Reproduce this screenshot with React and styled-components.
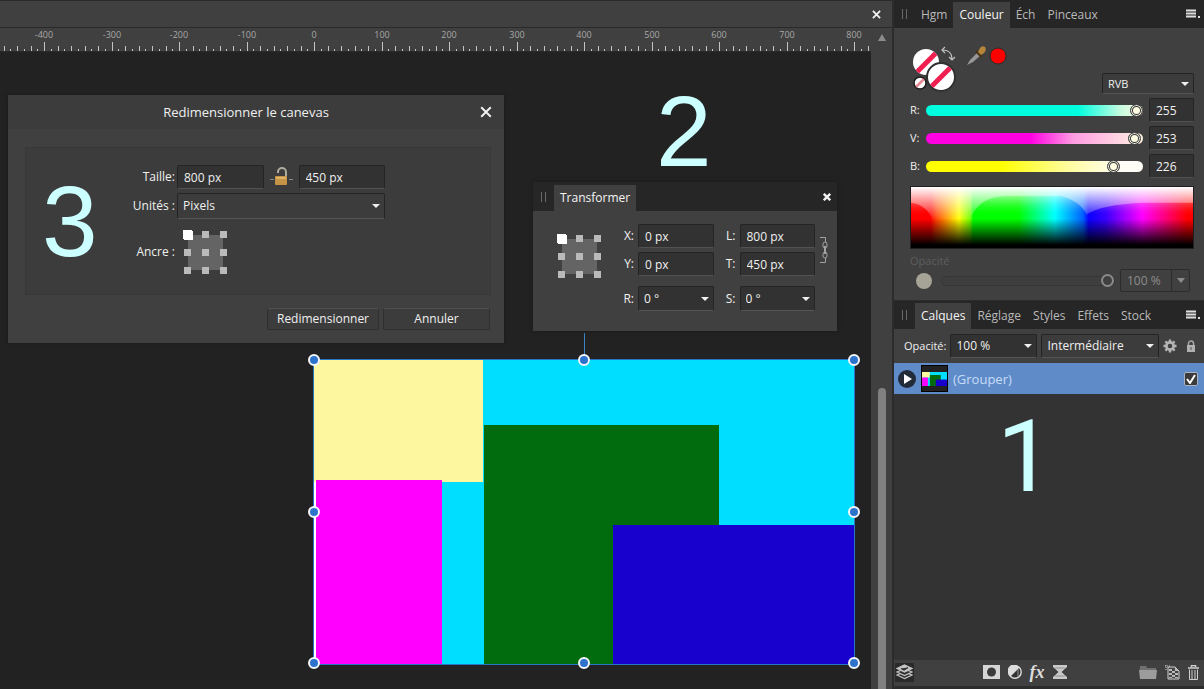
import { useState } from "react";
import styled, { createGlobalStyle } from "styled-components";

const RULER_ORIGIN = 314;
const RULER_STEP = 67.5;

export default function App() {
  return (
    <>
      <GlobalStyle />
      <StyledWorkspace>
        <StyledDocument>
          <StyledTitleBar>
            <CloseButton label="Fermer le document" size={9} />
          </StyledTitleBar>
          <StyledDocumentBody>
            <StyledView>
              <Ruler />
              <StyledCanvas>
                <Selection />
                <ResizeDialog />
                <TransformPanel />
                <StyledNumber $x={656} $y={29}>2</StyledNumber>
                <StyledNumber $x={42} $y={119}>3</StyledNumber>
              </StyledCanvas>
            </StyledView>
            <StyledScrollbar>
              <svg width="8" height="7"><path d="M4 0L8 7H0z" fill="#8c8c8c" /></svg>
              <StyledScrollThumb />
            </StyledScrollbar>
          </StyledDocumentBody>
        </StyledDocument>
        <StyledSidebar>
          <ColorPanel />
          <LayersPanel />
        </StyledSidebar>
      </StyledWorkspace>
    </>
  );
}

const Ruler = () => {
  const ticks = [];
  for (let i = -46; i <= 82; i++) {
    const height = i % 10 === 0 ? 10 : i % 2 === 0 ? 6 : 3;
    ticks.push({ i, x: Math.round(RULER_ORIGIN + (i * RULER_STEP) / 10), height });
  }
  return (
    <StyledRuler>
      {ticks.map(({ i, x, height }) => (
        <rect key={i} x={x} y={24 - height} width="1" height={height} fill="#c4c4c4" />
      ))}
      {ticks.filter(({ i }) => i % 10 === 0).map(({ i, x }) => (
        <text key={i} x={x} y="10" textAnchor="middle">{i * 10}</text>
      ))}
    </StyledRuler>
  );
};

const Artwork = ({ width, height }) => (
  <svg width={width} height={height} viewBox="0 0 540 304" preserveAspectRatio="none" aria-hidden="true">
    <rect width="540" height="304" fill="#00deff" />
    <rect width="169" height="122" fill="#fdf8a0" />
    <rect y="122" width="2" height="182" fill="#fff" />
    <rect x="2" y="120" width="126" height="184" fill="#ff00ff" />
    <rect x="170" y="65" width="235" height="239" fill="#006c0d" />
    <rect x="299" y="165" width="241" height="139" fill="#1800cd" />
  </svg>
);

const Selection = () => (
  <StyledSelection>
    <Artwork width="540" height="304" />
    <StyledRotateLine />
    {[0, 152, 303].map((y) =>
      [0, 270, 540].map((x) => (x === 270 && y === 152 ? null : <StyledHandle key={`${x}-${y}`} $x={x} $y={y} />))
    )}
  </StyledSelection>
);

const CloseButton = ({ label, size, weight = 2 }) => (
  <StyledIconButton type="button" aria-label={label}>
    <svg width={size} height={size} viewBox="0 0 10 10">
      <path d="M1 1L9 9M9 1L1 9" stroke="#f2f2f2" strokeWidth={weight} fill="none" />
    </svg>
  </StyledIconButton>
);

const MenuButton = () => (
  <StyledIconButton type="button" aria-label="Menu du panneau">
    <svg width="15" height="10">
      <path d="M0 1.5H10M0 4.5H10M0 7.5H10" stroke="#dedede" strokeWidth="2" />
      <path d="M12 7h2v2h-2z" fill="#dedede" />
    </svg>
  </StyledIconButton>
);

const Select = ({ id, label, value, options = [], ...rest }) => (
  <StyledSelectBox {...rest}>
    <StyledSelect id={id} aria-label={label} defaultValue={value}>
      {[value, ...options].map((option) => (
        <option key={option}>{option}</option>
      ))}
    </StyledSelect>
    <StyledCaret width="8" height="4"><path d="M0 0H8L4 4z" fill="#f0f0f0" /></StyledCaret>
  </StyledSelectBox>
);

const Anchor = ({ name }) => {
  const [anchor, setAnchor] = useState(0);
  return (
    <StyledAnchor role="radiogroup" aria-label="Ancre">
      {[0, 1, 2, 3, 4, 5, 6, 7, 8].map((i) => (
        <StyledAnchorPoint
          key={i}
          type="radio"
          name={name}
          aria-label={`Point ${i + 1}`}
          checked={anchor === i}
          onChange={() => setAnchor(i)}
        />
      ))}
    </StyledAnchor>
  );
};

const ResizeDialog = () => (
  <StyledDialog role="dialog" aria-labelledby="resize-title">
    <StyledDialogHeader>
      <StyledDialogTitle id="resize-title">Redimensionner le canevas</StyledDialogTitle>
      <CloseButton label="Fermer" size={12} weight={1.6} />
    </StyledDialogHeader>
    <StyledDialogForm>
      <StyledLabel htmlFor="width">Taille:</StyledLabel>
      <StyledSizeRow>
        <StyledInput id="width" defaultValue="800 px" />
        <StyledIconButton type="button" aria-label="Verrouiller les proportions">
          <svg width="23" height="20">
            <path d="M0 12.5H4M19 12.5H23" stroke="#888" />
            <path d="M8 6V5a4 4 0 0 1 8 0v5" fill="none" stroke="#b1aca0" strokeWidth="2" />
            <rect x="5" y="9" width="12" height="9" rx="1" fill="#c49345" />
            <path d="M6 10H16V12H6z" fill="#ddb367" />
          </svg>
        </StyledIconButton>
        <StyledInput aria-label="Hauteur" defaultValue="450 px" />
      </StyledSizeRow>
      <StyledLabel htmlFor="units">Unités :</StyledLabel>
      <Select id="units" value="Pixels" options={["Millimètres", "Pouces"]} $width={208} $height={26} $flat />
      <StyledAnchorLabel>Ancre :</StyledAnchorLabel>
      <Anchor name="dialog-anchor" />
    </StyledDialogForm>
    <StyledDialogFooter>
      <StyledButton type="button" $width={112}>Redimensionner</StyledButton>
      <StyledButton type="button" $width={107}>Annuler</StyledButton>
    </StyledDialogFooter>
  </StyledDialog>
);

const TransformPanel = () => (
  <StyledTransform>
    <StyledTransformHeader>
      <StyledGrip />
      <StyledTab type="button" $active>Transformer</StyledTab>
      <StyledSpacer />
      <CloseButton label="Fermer" size={8} weight={3} />
    </StyledTransformHeader>
    <StyledTransformBody>
      <Anchor name="transform-anchor" />
      <StyledTransformGrid>
        <StyledLabel htmlFor="x">X:</StyledLabel>
        <StyledInput id="x" defaultValue="0 px" />
        <StyledLabel htmlFor="w">L:</StyledLabel>
        <StyledInput id="w" defaultValue="800 px" />
        <StyledLabel htmlFor="y">Y:</StyledLabel>
        <StyledInput id="y" defaultValue="0 px" />
        <StyledLabel htmlFor="h">T:</StyledLabel>
        <StyledInput id="h" defaultValue="450 px" />
        <StyledLabel htmlFor="r">R:</StyledLabel>
        <Select id="r" value="0 °" options={["45 °", "90 °"]} $height={25} $top={6} />
        <StyledLabel htmlFor="s">S:</StyledLabel>
        <Select id="s" value="0 °" options={["15 °", "30 °"]} $height={25} $top={6} />
      </StyledTransformGrid>
      <StyledLinkButton type="button" aria-label="Lier les dimensions">
        <svg width="8" height="26" fill="none" stroke="#a2a2a2">
          <path d="M0 .5H5.500V5M0 25.500H5.500V21" />
          <rect x="3" y="5" width="4" height="6" rx="2" />
          <rect x="3" y="15" width="4" height="6" rx="2" />
          <path d="M5 9V17" strokeWidth="2" />
        </svg>
      </StyledLinkButton>
    </StyledTransformBody>
  </StyledTransform>
);

const Channel = ({ id, label, initial, track }) => {
  const [value, setValue] = useState(initial);
  return (
    <StyledChannel>
      <StyledSmallLabel htmlFor={id}>{label}</StyledSmallLabel>
      <StyledRange
        type="range"
        id={id}
        min="0"
        max="255"
        value={value}
        $track={track}
        onChange={(e) => setValue(e.target.value)}
      />
      <StyledInput aria-label={`Valeur ${label}`} value={value} onChange={(e) => setValue(e.target.value)} />
    </StyledChannel>
  );
};

const ColorWells = () => (
  <svg width="100" height="48" aria-hidden="true">
    <defs>
      <clipPath id="stroke-well"><circle cx="16" cy="18" r="13" /></clipPath>
      <clipPath id="fill-well"><circle cx="31" cy="33" r="13" /></clipPath>
      <clipPath id="none-well"><circle cx="10" cy="39" r="5.500" /></clipPath>
    </defs>
    <circle cx="16" cy="18" r="13" fill="#fff" />
    <path d="M3 32L31 4" stroke="#f01f50" strokeWidth="5" clipPath="url(#stroke-well)" />
    <circle cx="31" cy="33" r="14" fill="#fff" stroke="#303030" strokeWidth="2" />
    <path d="M18 46L44 20" stroke="#f01f50" strokeWidth="5" clipPath="url(#fill-well)" />
    <circle cx="10" cy="39" r="6" fill="#fff" stroke="#1c1c1c" strokeWidth="1.500" />
    <path d="M5 44L15 34" stroke="#e68b96" strokeWidth="2.500" clipPath="url(#none-well)" />
    <path d="M32 6C39 6 42 9 42 15M35 3L32 6L35 9M39 13L42 16L45 13" fill="none" stroke="#c0c0c0" strokeWidth="1.200" />
    <path d="M57 21L60 16L68 8L71 11L63 18z" fill="#989898" />
    <path d="M66 7L72 13" stroke="#493516" strokeWidth="2.500" />
    <path d="M68 8L70 4Q72 1 75 3Q77 6 74 9L71 11z" fill="#b6853a" />
    <circle cx="88" cy="12" r="8" fill="#ff0000" stroke="#2b2b2b" />
  </svg>
);

const Spectrum = () => (
  <StyledSpectrum viewBox="0 0 284 62" preserveAspectRatio="none" role="img" aria-label="Spectre">
    <defs>
      <linearGradient id="hue">
        <stop offset="0" stopColor="#f00" />
        <stop offset=".07" stopColor="#f00" />
        <stop offset=".09" stopColor="#ff4000" />
        <stop offset=".17" stopColor="#ff0" />
        <stop offset=".21" stopColor="#70ff00" />
        <stop offset=".22" stopColor="#0f0" />
        <stop offset=".38" stopColor="#0f0" />
        <stop offset=".51" stopColor="#0ff" />
        <stop offset=".61" stopColor="#0060ff" />
        <stop offset=".63" stopColor="#0a00ff" />
        <stop offset=".69" stopColor="#3800ff" />
        <stop offset=".82" stopColor="#f0f" />
        <stop offset=".98" stopColor="#f00" />
      </linearGradient>
      <linearGradient id="tint" x2="0" y2="1">
        <stop offset="0" stopColor="#fff" />
        <stop offset=".55" stopColor="#fff" stopOpacity="0" />
      </linearGradient>
      <linearGradient id="dome" x2="0" y2="1">
        <stop offset=".05" stopColor="#000" />
        <stop offset=".45" stopColor="#fff" />
      </linearGradient>
      <linearGradient id="shade" x2="0" y2="1">
        <stop offset=".52" stopColor="#000" stopOpacity="0" />
        <stop offset=".95" stopColor="#000" />
      </linearGradient>
      <mask id="dome-mask"><rect width="284" height="62" fill="url(#dome)" /></mask>
      <clipPath id="dome-shape">
        <path d="M0 16Q16 18 22 34V62H0zM60 62V34Q66 9 100 9H150Q170 14 177 28Q190 18 235 16H284V62z" />
      </clipPath>
    </defs>
    <rect width="284" height="62" fill="url(#hue)" />
    <rect width="284" height="62" fill="url(#tint)" />
    <g mask="url(#dome-mask)">
      <rect width="284" height="62" fill="url(#hue)" clipPath="url(#dome-shape)" />
    </g>
    <rect width="284" height="62" fill="url(#shade)" />
  </StyledSpectrum>
);

const ColorPanel = () => (
  <StyledPanel>
    <StyledTabBar>
      <StyledGrip />
      <StyledTab type="button">Hgm</StyledTab>
      <StyledTab type="button" $active>Couleur</StyledTab>
      <StyledTab type="button">Éch</StyledTab>
      <StyledTab type="button">Pinceaux</StyledTab>
      <StyledSpacer />
      <MenuButton />
    </StyledTabBar>
    <StyledColorBody>
      <StyledWellRow>
        <ColorWells />
        <Select label="Modèle de couleur" value="RVB" options={["TSL", "CMJN"]} $width={92} $height={21} $small />
      </StyledWellRow>
      <Channel id="red" label="R:" initial={255} track="#00ffdf 70%, #c9fbe0 90%, #fffde2" />
      <Channel id="green" label="V:" initial={253} track="#ff00e2 48%, #ff9de2 68%, #fff3e2" />
      <Channel id="blue" label="B:" initial={226} track="#ffff00 34%, #fffd9c 65%, #fffdf6 90%" />
      <Spectrum />
      <StyledMutedLabel htmlFor="noise">Opacité</StyledMutedLabel>
      <StyledOpacityRow>
        <StyledSwatch />
        <StyledOpacityRange type="range" id="noise" defaultValue="100" disabled />
        <StyledDisabledField>
          <StyledDisabledInput aria-label="Valeur d’opacité" defaultValue="100 %" disabled />
          <StyledDisabledButton type="button" aria-label="Choisir l’opacité" disabled>
            <svg width="8" height="5"><path d="M0 0H8L4 5z" fill="#8c8c8c" /></svg>
          </StyledDisabledButton>
        </StyledDisabledField>
      </StyledOpacityRow>
    </StyledColorBody>
  </StyledPanel>
);

const LayersPanel = () => (
  <StyledLayersPanel>
    <StyledTabBar>
      <StyledGrip />
      <StyledTab type="button" $active>Calques</StyledTab>
      <StyledTab type="button">Réglage</StyledTab>
      <StyledTab type="button">Styles</StyledTab>
      <StyledTab type="button">Effets</StyledTab>
      <StyledTab type="button">Stock</StyledTab>
      <StyledSpacer />
      <MenuButton />
    </StyledTabBar>
    <StyledLayerOptions>
      <StyledSmallLabel htmlFor="layer-opacity">Opacité:</StyledSmallLabel>
      <Select id="layer-opacity" value="100 %" options={["50 %"]} $width={87} $height={24} />
      <Select label="Mode de fusion" value="Intermédiaire" options={["Normal", "Produit"]} $width={118} $height={24} $flat />
      <StyledIconButton type="button" aria-label="Options de fusion">
        <svg width="14" height="14" viewBox="-7 -7 14 14">
          <circle r="3.600" fill="none" stroke="#b5b5b5" strokeWidth="2.600" />
          <path d="M0-6.500V-4M0 4V6.500M-6.500 0H-4M4 0H6.500M-4.600-4.600L-3-3M3 3L4.600 4.600M-4.600 4.600L-3 3M3-3L4.600-4.600" stroke="#b5b5b5" strokeWidth="2.400" />
        </svg>
      </StyledIconButton>
      <StyledIconButton type="button" aria-label="Verrouiller le calque">
        <svg width="10" height="12">
          <path d="M2.500 6V3.500a2.500 2.500 0 0 1 5 0V6" fill="none" stroke="#a5a5a5" strokeWidth="1.500" />
          <rect x="1" y="5" width="8" height="7" fill="#b0b0b0" />
          <path d="M5 7V10" stroke="#555" />
        </svg>
      </StyledIconButton>
    </StyledLayerOptions>
    <StyledLayerList>
      <StyledLayer>
        <StyledIconButton type="button" aria-label="Déplier le groupe">
          <svg width="18" height="18">
            <circle cx="9" cy="9" r="9" fill="#222b38" />
            <path d="M6 4L14 9L6 14z" fill="#fff" />
          </svg>
        </StyledIconButton>
        <StyledThumbnail><Artwork width="25" height="14" /></StyledThumbnail>
        <StyledLayerName htmlFor="layer-visible">(Grouper)</StyledLayerName>
        <StyledCheckBox>
          <StyledCheckbox type="checkbox" id="layer-visible" defaultChecked />
          <StyledCheckMark width="10" height="10">
            <path d="M1 5L4 9L9 1" fill="none" stroke="#fff" strokeWidth="2" />
          </StyledCheckMark>
        </StyledCheckBox>
      </StyledLayer>
      <StyledLayerNumber>1</StyledLayerNumber>
    </StyledLayerList>
    <LayerToolbar />
  </StyledLayersPanel>
);

const LayerToolbar = () => (
  <StyledLayerToolbar>
    <StyledToolButton type="button" aria-label="Tous les calques" $pressed>
      <svg width="17" height="16" fill="#303030" stroke="#c4c4c4" strokeWidth="1.200">
        <path d="M1 11L8.500 14.500L16 11L8.500 8z" />
        <path d="M1 8L8.500 11.500L16 8L8.500 5z" />
        <path d="M1 4.500L8.500 8L16 4.500L8.500 1z" fill="#c4c4c4" />
        <path d="M5 4.500L8 6L12 3.500" stroke="#303030" />
      </svg>
    </StyledToolButton>
    <StyledFilterGroup>
      <StyledToolButton type="button" aria-label="Masque">
        <svg width="17" height="14"><rect width="17" height="14" fill="#d6d6d6" /><circle cx="8.500" cy="7" r="4.500" fill="#3b3b3b" /></svg>
      </StyledToolButton>
      <StyledToolButton type="button" aria-label="Réglages">
        <svg width="14" height="14">
          <circle cx="7" cy="7" r="6.200" fill="#333" stroke="#ddd" strokeWidth="1.400" />
          <path d="M11.500 2.500A6.500 6.500 0 1 0 2.500 11.500z" fill="#ddd" />
          <path d="M10 4V12" stroke="#999" />
        </svg>
      </StyledToolButton>
      <StyledToolButton type="button" aria-label="Effets de calque"><StyledFx>fx</StyledFx></StyledToolButton>
      <StyledToolButton type="button" aria-label="Filtre dynamique">
        <svg width="14" height="14"><path d="M0 0H14V2L8.500 7L14 12V14H0V12L5.500 7L0 2z" fill="#c9c9c9" /><path d="M2 3H12M2 11H12" stroke="#919191" /></svg>
      </StyledToolButton>
    </StyledFilterGroup>
    <StyledToolGroup>
      <StyledToolButton type="button" aria-label="Nouveau groupe">
        <svg width="18" height="14"><path d="M1 1H7L8 3H17V6H1z" fill="#707070" /><path d="M0 5H18L17 14H1z" fill="#9c9c9c" /></svg>
      </StyledToolButton>
      <StyledToolButton type="button" aria-label="Nouveau calque">
        <svg width="15" height="15">
          <path d="M3 2H10L14 6V14H3z" fill="#454545" stroke="#d0d0d0" />
          <path d="M4 4h3v2h-3zM7 6h3v2h-3zM4 8h3v2h-3zM10 8h3v2h-3zM7 10h3v2h-3zM4 12h3v1h-3zM10 12h3v1h-3zM10 2v4h4z" fill="#b9b9b9" />
          <path d="M0 1H6M1 0V6" stroke="#d0d0d0" strokeDasharray="1 1" />
        </svg>
      </StyledToolButton>
      <StyledToolButton type="button" aria-label="Supprimer">
        <svg width="11" height="15" fill="none" stroke="#d0d0d0">
          <path d="M0 3H11M3.500 2V.5H7.500V2" strokeWidth="1.600" />
          <path d="M1.500 4.500V14.500H9.500V4.500M4 5V14M7 5V14" />
        </svg>
      </StyledToolButton>
    </StyledToolGroup>
  </StyledLayerToolbar>
);

const GlobalStyle = createGlobalStyle`
  * {
    box-sizing: border-box;
  }

  body {
    margin: 0;
    background: #222222;
    color: #f0f0f0;
    font-family: "Open Sans", "Noto Sans", sans-serif;
    font-size: 12px;
    line-height: 16px;
  }

  button, input, select {
    font: inherit;
    color: inherit;
    margin: 0;
  }

  svg {
    display: block;
    flex: none;
  }
`;

const StyledWorkspace = styled.div`
  display: flex;
  min-height: 100vh;
`;

const StyledDocument = styled.main`
  flex: 1;
  min-width: 0;
  display: flex;
  flex-direction: column;
`;

const StyledTitleBar = styled.div`
  display: flex;
  align-items: center;
  justify-content: flex-end;
  height: 28px;
  padding-right: 11px;
  background: #404040;
  border-top: 1px solid #2a2a2a;
  border-bottom: 1px solid #2a2a2a;
`;

const StyledDocumentBody = styled.div`
  flex: 1;
  display: flex;
`;

const StyledView = styled.div`
  flex: 1;
  min-width: 0;
  display: flex;
  flex-direction: column;
`;

const StyledRuler = styled.svg`
  width: 100%;
  height: 24px;
  background: #404040;
  border-bottom: 1px solid #2a2a2a;
  fill: #a8a8a8;
  font-size: 9px;
  shape-rendering: crispEdges;
`;

const StyledCanvas = styled.div`
  flex: 1;
  position: relative;
  overflow: hidden;
  background: #222222;
`;

const StyledScrollbar = styled.div`
  display: flex;
  flex-direction: column;
  align-items: center;
  justify-content: space-between;
  width: 21px;
  padding-top: 6px;
  background: #404040;
`;

const StyledScrollThumb = styled.div`
  width: 8px;
  height: 46%;
  border-radius: 4px 4px 0 0;
  background: #808080;
`;

const StyledNumber = styled.span`
  position: absolute;
  left: ${(props) => props.$x}px;
  top: ${(props) => props.$y}px;
  color: #ccffff;
  font-family: "Liberation Sans", sans-serif;
  font-size: 100px;
  line-height: 100px;
`;

const StyledSelection = styled.div`
  position: absolute;
  left: 314px;
  top: 308px;
  outline: 1px solid #2877c7;
`;

const StyledRotateLine = styled.div`
  position: absolute;
  left: 270px;
  top: -27px;
  width: 1px;
  height: 27px;
  background: #3b83c5;
`;

const StyledHandle = styled.div`
  position: absolute;
  left: ${(props) => props.$x - 6}px;
  top: ${(props) => props.$y - 6}px;
  width: 12px;
  height: 12px;
  border: 2px solid #f4f6fa;
  border-radius: 50%;
  background: #2d73cc;
`;

const StyledIconButton = styled.button`
  display: flex;
  align-items: center;
  justify-content: center;
  flex: none;
  padding: 0;
  border: 0;
  background: none;
`;

const StyledGrip = styled.span`
  width: 5px;
  height: 10px;
  margin: 0 8px;
  border-left: 1px solid #686868;
  border-right: 1px solid #686868;
`;

const StyledSpacer = styled.span`
  flex: 1;
`;

const StyledTab = styled.button`
  align-self: flex-end;
  height: 26px;
  padding: 0 6px;
  border: 0;
  white-space: nowrap;
  background: ${(props) => (props.$active ? "#404040" : "transparent")};
  color: ${(props) => (props.$active ? "#f4f4f4" : "#b9b9b9")};
`;

const StyledInput = styled.input`
  width: 100%;
  min-width: 0;
  height: 24px;
  padding: 0 6px;
  border: 1px solid #242424;
  border-bottom-color: #525252;
  border-radius: 2px;
  background: #323232;
`;

const StyledSelectBox = styled.span`
  position: relative;
  display: flex;
  align-items: center;
  flex: none;
  width: ${(props) => (props.$width ? `${props.$width}px` : "100%")};
  height: ${(props) => props.$height}px;
  margin-top: ${(props) => props.$top || 0}px;
  border: 1px solid #242424;
  border-bottom-color: #555555;
  border-radius: 2px;
  background: ${(props) => (props.$flat || props.$small ? "#3c3c3c" : "#323232")};
  font-size: ${(props) => (props.$small ? 11 : 12)}px;
`;

const StyledSelect = styled.select`
  appearance: none;
  width: 100%;
  height: 100%;
  padding: 0 16px 0 5px;
  border: 0;
  background: transparent;

  option {
    background: #3c3c3c;
  }
`;

const StyledCaret = styled.svg`
  position: absolute;
  right: 4px;
  pointer-events: none;
`;

const StyledLabel = styled.label`
  text-align: right;
`;

const StyledAnchorLabel = styled.span`
  margin-top: 7px;
  text-align: right;
`;

const StyledSmallLabel = styled.label`
  font-size: 11px;
`;

const StyledAnchor = styled.div`
  display: grid;
  grid-template-columns: repeat(3, 7px);
  gap: 11px;
  width: 43px;
  height: 43px;
  background: linear-gradient(#646464, #646464) center / 35px 35px no-repeat;
`;

const StyledAnchorPoint = styled.input`
  appearance: none;
  width: 7px;
  height: 7px;
  background: #bababa;

  &:checked {
    background: #ffffff;
    box-shadow: 0 0 0 1px #ffffff, 1px 1px 0 1px #ffffff;
  }
`;

const StyledDialog = styled.section`
  position: absolute;
  left: 8px;
  top: 43px;
  width: 496px;
  background: #404040;
  box-shadow: 0 0 4px #1a1a1a;
`;

const StyledDialogHeader = styled.header`
  display: flex;
  align-items: center;
  height: 34px;
  padding: 0 12px 0 4px;
  background: #3c3c3c;
`;

const StyledDialogTitle = styled.h2`
  flex: 1;
  margin: 0;
  font-size: 13px;
  font-weight: 400;
  text-align: center;
`;

const StyledDialogForm = styled.div`
  display: grid;
  grid-template-columns: 149px 208px;
  align-items: center;
  column-gap: 2px;
  row-gap: 4px;
  height: 148px;
  margin: 18px 13px 0 17px;
  padding: 17px 0 20px;
  border: 1px solid #383838;
  background: #3c3c3c;

  ${StyledAnchor} {
    margin: 7px 0 0 7px;
  }
`;

const StyledSizeRow = styled.div`
  display: grid;
  grid-template-columns: 1fr 35px 1fr;
`;

const StyledDialogFooter = styled.footer`
  display: flex;
  justify-content: flex-end;
  gap: 4px;
  padding: 13px 14px 13px;
`;

const StyledButton = styled.button`
  width: ${(props) => props.$width}px;
  height: 22px;
  padding: 0;
  border: 1px solid #2f2f2f;
  border-top-color: #505050;
  border-radius: 2px;
  background: #3c3c3c;
`;

const StyledTransform = styled.section`
  position: absolute;
  left: 533px;
  top: 130px;
  width: 304px;
  background: #404040;
  box-shadow: 0 0 4px #1a1a1a;
`;

const StyledTransformHeader = styled.header`
  display: flex;
  align-items: center;
  height: 29px;
  padding-right: 6px;
  background: #262626;
`;

const StyledTransformBody = styled.div`
  display: flex;
  align-items: flex-start;
  padding: 13px 9px 20px 25px;

  ${StyledAnchor} {
    margin-top: 11px;
  }
`;

const StyledTransformGrid = styled.div`
  flex: 1;
  display: grid;
  grid-template-columns: 33px 1fr 18px 1fr;
  align-items: center;
  column-gap: 4px;
  row-gap: 4px;

  ${StyledLabel}:nth-last-of-type(-n + 2) {
    padding-top: 6px;
  }
`;

const StyledLinkButton = styled(StyledIconButton)`
  margin: 13px 0 0 5px;
`;

const StyledSidebar = styled.aside`
  display: flex;
  flex-direction: column;
  flex: none;
  width: 312px;
  border-left: 2px solid #2c2c2c;
`;

const StyledPanel = styled.section`
  background: #404040;
`;

const StyledTabBar = styled.div`
  display: flex;
  align-items: center;
  height: 28px;
  padding-right: 3px;
  background: #262626;
`;

const StyledColorBody = styled.div`
  padding: 16px 10px 8px 16px;
`;

const StyledWellRow = styled.div`
  display: flex;
  align-items: flex-end;
  justify-content: space-between;
  height: 50px;

  > svg {
    align-self: flex-start;
  }
`;

const StyledChannel = styled.div`
  display: grid;
  grid-template-columns: 16px 1fr 45px;
  align-items: center;
  margin-top: 4px;
`;

const StyledRange = styled.input`
  appearance: none;
  height: 11px;
  margin-right: 6px;
  border-radius: 6px;
  background: linear-gradient(to right, ${(props) => props.$track});

  &::-webkit-slider-thumb {
    appearance: none;
    width: 13px;
    height: 13px;
    border: 1px solid #353535;
    border-radius: 50%;
    background: #fffde2;
    box-shadow: inset 0 0 0 1px #efefe2, inset 0 0 0 2px #353535;
  }
`;

const StyledSpectrum = styled.svg`
  width: 100%;
  height: 63px;
  margin-top: 8px;
  border: 1px solid #202020;
`;

const StyledMutedLabel = styled.label`
  display: block;
  margin-top: 4px;
  font-size: 11px;
  color: #5e5e5e;
`;

const StyledOpacityRow = styled.div`
  display: flex;
  align-items: center;
  padding: 0 4px 0 6px;
`;

const StyledSwatch = styled.span`
  width: 16px;
  height: 16px;
  margin-right: 9px;
  border-radius: 50%;
  background: #a5a496;
`;

const StyledOpacityRange = styled.input`
  appearance: none;
  flex: 1;
  min-width: 0;
  height: 10px;
  margin-right: 5px;
  border: 1px solid #363636;
  border-radius: 5px;
  background: #3e3e3e;

  &::-webkit-slider-thumb {
    appearance: none;
    width: 13px;
    height: 13px;
    border: 2px solid #8b8b8b;
    border-radius: 50%;
    background: #404040;
  }
`;

const StyledDisabledField = styled.div`
  display: flex;
  width: 70px;
  height: 23px;
  border: 1px solid #2c2c2c;
  border-radius: 2px;
`;

const StyledDisabledInput = styled.input`
  flex: 1;
  min-width: 0;
  padding: 0 6px;
  border: 0;
  background: transparent;
  color: #8c8c8c;
`;

const StyledDisabledButton = styled(StyledIconButton)`
  width: 18px;
  border-left: 1px solid #2c2c2c;
`;

const StyledLayersPanel = styled.section`
  flex: 1;
  display: flex;
  flex-direction: column;
  border-top: 1px solid #2c2c2c;
  background: #404040;
`;

const StyledLayerOptions = styled.div`
  display: flex;
  align-items: center;
  gap: 4px;
  height: 34px;
  padding: 0 8px 0 10px;

  ${StyledIconButton}:last-child {
    margin-left: auto;
  }
`;

const StyledLayerList = styled.div`
  flex: 1;
  background: #333333;
`;

const StyledLayer = styled.div`
  display: flex;
  align-items: center;
  height: 31px;
  padding: 0 6px 0 4px;
  background: #608bc9;
`;

const StyledThumbnail = styled.span`
  display: flex;
  align-items: center;
  justify-content: center;
  width: 27px;
  height: 27px;
  margin: 0 5px;
  border: 1px solid #000000;
  background: #222222;
`;

const StyledLayerName = styled.label`
  flex: 1;
  font-size: 13px;
  color: #c7dcf7;
`;

const StyledCheckBox = styled.span`
  position: relative;
  display: flex;
`;

const StyledCheckbox = styled.input`
  appearance: none;
  width: 14px;
  height: 14px;
  border: 1px solid #a9b3c2;
  border-radius: 2px;
  background: #3a3a3a;
`;

const StyledCheckMark = styled.svg`
  position: absolute;
  left: 2px;
  top: 2px;
  pointer-events: none;

  ${StyledCheckbox}:not(:checked) + & {
    display: none;
  }
`;

const StyledLayerNumber = styled.div`
  padding: 13px 0 0 103px;
  color: #ccffff;
  font-family: Roboto, sans-serif;
  font-size: 100px;
  line-height: 100px;
`;

const StyledLayerToolbar = styled.footer`
  display: flex;
  align-items: center;
  justify-content: space-between;
  height: 29px;
  padding: 0 5px 2px 1px;
  border-bottom: 3px solid #2c2c2c;
`;

const StyledToolGroup = styled.div`
  display: flex;
  align-items: center;
  gap: 8px;
`;

const StyledFilterGroup = styled(StyledToolGroup)`
  margin-right: 4px;
`;

const StyledToolButton = styled(StyledIconButton)`
  min-width: 11px;
  height: 19px;
  padding: ${(props) => (props.$pressed ? "0 1px" : "0")};
  background: ${(props) => (props.$pressed ? "#2a2a2a" : "transparent")};
`;

const StyledFx = styled.span`
  font-family: "Liberation Serif", serif;
  font-size: 18px;
  font-style: italic;
  font-weight: 700;
  color: #dddddd;
`;
